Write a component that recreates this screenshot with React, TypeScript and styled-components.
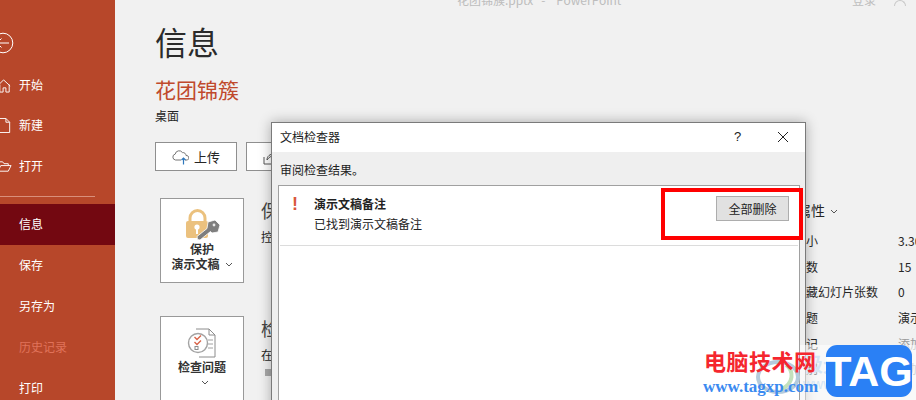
import React from 'react'
import styled, { createGlobalStyle } from 'styled-components'

const FONT = '"Noto Sans CJK SC", "Noto Sans", sans-serif'

const GlobalStyle = createGlobalStyle`
  html, body {
    margin: 0;
    padding: 0;
    background: #f1f1f1;
  }
  * {
    box-sizing: border-box;
  }
`

function BackIcon() {
  return (
    <BackSvg viewBox="0 0 22 22">
      <circle cx="11" cy="11" r="9.8" fill="none" stroke="#fff" strokeWidth="1" />
      <path d="M5 11h12M9.5 6.5L5 11l4.5 4.5" fill="none" stroke="#fff" strokeWidth="1" />
    </BackSvg>
  )
}

function HomeIcon() {
  return (
    <NavSvg viewBox="0 0 16 16">
      <path d="M1 8l6-6 7 6.5M3 7v8h3.5v-4.500h3V15H13V7" fill="none" stroke="#fff" strokeWidth="1" />
    </NavSvg>
  )
}

function NewIcon() {
  return (
    <NavSvg viewBox="0 0 16 16">
      <path d="M2.500 0.500h7l4 4v11h-11zM9.500 0.500v4h4" fill="none" stroke="#fff" strokeWidth="1" />
    </NavSvg>
  )
}

function OpenIcon() {
  return (
    <NavSvg viewBox="0 0 16 16">
      <path d="M1 13V3h5l1.500 2h4.500v2M1 13l3-6h11l-3 6z" fill="none" stroke="#fff" strokeWidth="1" />
    </NavSvg>
  )
}

function CloudIcon() {
  return (
    <svg width="17" height="16" viewBox="0 0 17 16">
      <path d="M9 11H3.500a3 3 0 0 1-.3-5.900A4 4 0 0 1 10.500 3.600 3 3 0 0 1 14 6.500a2.400 2.400 0 0 1 1.500 4.500H13" fill="none" stroke="#757575" strokeWidth="1" />
      <path d="M11.500 15.500V9M9.500 11l2-2 2 2" fill="none" stroke="#2f78bd" strokeWidth="1.200" />
    </svg>
  )
}

function ShareIcon() {
  return (
    <svg width="16" height="16" viewBox="0 0 16 16">
      <path d="M1 8v7h13v-3" fill="none" stroke="#555" strokeWidth="1" />
      <path d="M4 11c0-4 3-6 7-6V2.500L15.500 6 11 9.500V7c-3 0-5 1-7 4z" fill="none" stroke="#555" strokeWidth="1" />
    </svg>
  )
}

function LockIcon() {
  return (
    <svg width="38" height="32" viewBox="-2 0 38 32">
      <path d="M5 12V9a7.500 7.500 0 0 1 15 0v3" fill="none" stroke="#ebc17e" strokeWidth="3" />
      <rect x="1" y="12" width="22" height="17" rx="2" fill="#ebc17e" />
      <circle cx="12" cy="18" r="2.600" fill="#fff" />
      <rect x="11" y="19" width="2" height="6" fill="#fff" />
      <path d="M23 13l7-2 5 5-2 7-6 1-1.500-1.500L15 31l-2.500-.5-.5-3 10-8z" fill="#7e7e7e" stroke="#fff" strokeWidth="0.800" />
      <circle cx="29" cy="16" r="1.400" fill="#e8e8e8" />
    </svg>
  )
}

function InspectIcon() {
  return (
    <InspectSvg viewBox="0 0 30 30">
      <path d="M9 1h13l6 6v22H12" fill="none" stroke="#8c8c8c" strokeWidth="1" />
      <path d="M22 1v6h6" fill="none" stroke="#8c8c8c" strokeWidth="1" />
      <path d="M21 12h5M21 16h5M21 20h5" stroke="#a0a0a0" strokeWidth="1" />
      <circle cx="11" cy="15" r="9.500" fill="#fff" stroke="#a3a3a3" strokeWidth="1.400" />
      <path d="M7.500 9l2.500 2.500L14 7.500M7.500 14l2.500 2.500L14 12.500" fill="none" stroke="#d9654a" strokeWidth="1.400" />
      <rect x="8" y="18.500" width="3" height="3" fill="none" stroke="#8c8c8c" strokeWidth="1" />
    </InspectSvg>
  )
}

function Chevron() {
  return (
    <ChevronSvg viewBox="0 0 8 5">
      <path d="M1 1l3 3 3-3" fill="none" stroke="#555" strokeWidth="1" />
    </ChevronSvg>
  )
}

const navTop = [
  { label: '开始', icon: <HomeIcon /> },
  { label: '新建', icon: <NewIcon /> },
  { label: '打开', icon: <OpenIcon /> },
]

const navBottom = [
  { label: '信息', active: true },
  { label: '保存' },
  { label: '另存为' },
  { label: '历史记录', disabled: true },
  { label: '打印' },
]

const props = [
  { label: '大小', value: '3.30MB' },
  { label: '页数', value: '15' },
  { label: '隐藏幻灯片张数', value: '0' },
  { label: '标题', value: '演示文稿' },
  { label: '标记', value: '添加标记', muted: true },
  { label: '类别', value: '添加类别', muted: true },
]

export default function App() {
  return (
    <Page>
      <GlobalStyle />
      <Sidebar>
        <BackRow>
          <BackIcon />
        </BackRow>
        <NavGroup>
          {navTop.map((item) => (
            <TopNavItem key={item.label}>
              {item.icon}
              {item.label}
            </TopNavItem>
          ))}
        </NavGroup>
        <NavDivider />
        <NavGroup>
          {navBottom.map((item) => (
            <BottomNavItem key={item.label} $active={item.active} $disabled={item.disabled}>
              {item.label}
            </BottomNavItem>
          ))}
        </NavGroup>
      </Sidebar>

      <Main>
        <TitleBar>
          <WindowTitle>花团锦簇.pptx&nbsp;&nbsp; -&nbsp;&nbsp;&nbsp; PowerPoint</WindowTitle>
          <SignIn>登录</SignIn>
          <Avatar />
        </TitleBar>
        <Columns>
          <LeftColumn>
            <PageTitle>信息</PageTitle>
            <DocName>花团锦簇</DocName>
            <DocPath>桌面</DocPath>
            <ActionRow>
              <ActionButton>
                <CloudIcon />
                上传
              </ActionButton>
              <ActionButton>
                <ShareIcon />
                共享
              </ActionButton>
            </ActionRow>
            <Section>
              <FeatureCard>
                <LockIcon />
                <FeatureLabel>保护</FeatureLabel>
                <FeatureLabel>
                  演示文稿
                  <Chevron />
                </FeatureLabel>
              </FeatureCard>
              <SectionText>
                <SectionTitle>保护演示文稿</SectionTitle>
                <SectionDesc>控制其他人可以对此演示文稿所做的更改类型。</SectionDesc>
              </SectionText>
            </Section>
            <Section>
              <FeatureCard>
                <InspectIcon />
                <FeatureLabel>检查问题</FeatureLabel>
                <FeatureLabel>
                  <Chevron />
                </FeatureLabel>
              </FeatureCard>
              <SectionText>
                <SectionTitle>检查演示文稿</SectionTitle>
                <SectionDesc>在发布此文件之前,请注意其是否包含:</SectionDesc>
                <Bullet />
              </SectionText>
            </Section>
          </LeftColumn>
          <PropsColumn>
            <PropsTitle>
              属性
              <Chevron />
            </PropsTitle>
            {props.map((p) => (
              <PropRow key={p.label}>
                <PropLabel>{p.label}</PropLabel>
                <PropValue $muted={p.muted}>{p.value}</PropValue>
              </PropRow>
            ))}
          </PropsColumn>
        </Columns>
      </Main>

      <Dialog>
        <DialogHeader>
          <DialogTitle>文档检查器</DialogTitle>
          <HelpButton>?</HelpButton>
          <CloseButton>
            <svg width="12" height="12" viewBox="0 0 12 12">
              <path d="M1 1l10 10M11 1L1 11" stroke="#222" strokeWidth="1" />
            </svg>
          </CloseButton>
        </DialogHeader>
        <DialogBody>
          <DialogHint>审阅检查结果。</DialogHint>
          <ResultList>
            <ResultRow>
              <WarnMark>!</WarnMark>
              <ResultText>
                <ResultTitle>演示文稿备注</ResultTitle>
                <ResultDesc>已找到演示文稿备注</ResultDesc>
              </ResultText>
              <RemoveButton>全部删除</RemoveButton>
            </ResultRow>
          </ResultList>
        </DialogBody>
      </Dialog>

      <Highlight />

      <Watermark>
        <FaintBand>
          <FaintName>极光下载站</FaintName>
          <FaintUrl>www.xz7.com</FaintUrl>
        </FaintBand>
        <FaintLogo viewBox="0 0 44 40">
          <ellipse cx="22" cy="20" rx="20" ry="15" fill="none" stroke="#b5cbdc" strokeWidth="4" />
          <path d="M30 8c8 6 8 18-4 24" fill="none" stroke="#c3e0bc" strokeWidth="4" />
        </FaintLogo>
        <SiteName>电脑技术网</SiteName>
        <SiteUrl>www.tagxp.com</SiteUrl>
        <TagBadge>TAG</TagBadge>
      </Watermark>
    </Page>
  )
}

const Page = styled.div`
  position: relative;
  display: flex;
  width: 916px;
  height: 400px;
  overflow: hidden;
  background: #f1f1f1;
  font-family: ${FONT};
  color: #262626;
`

const Sidebar = styled.nav`
  flex: 0 0 115px;
  padding-top: 32px;
  background: #b7472a;
  color: #fff;
`

const BackRow = styled.div`
  height: 20px;
  margin-bottom: 13px;
`

const BackSvg = styled.svg`
  display: block;
  width: 22px;
  height: 22px;
  margin-left: -8px;
`

const NavGroup = styled.div`
  display: flex;
  flex-direction: column;
`

const TopNavItem = styled.div`
  display: flex;
  align-items: center;
  height: 40.5px;
  padding-bottom: 2px;
  font-size: 12px;
`

const NavSvg = styled.svg`
  flex: none;
  width: 15px;
  height: 15px;
  margin: 2px 7px 0 -3px;
`

const NavDivider = styled.div`
  width: 95px;
  height: 1px;
  margin: 9px 0 7px;
  background: #d98f7b;
`

const BottomNavItem = styled.div<{ $active?: boolean; $disabled?: boolean }>`
  display: flex;
  align-items: center;
  height: 41px;
  padding: 0 0 2px 19px;
  font-size: 12px;
  background: ${(p) => (p.$active ? '#730811' : 'transparent')};
  color: ${(p) => (p.$disabled ? '#e0735a' : '#fff')};
`

const Main = styled.main`
  display: flex;
  flex: 1;
  flex-direction: column;
  min-width: 0;
`

const TitleBar = styled.header`
  display: flex;
  align-items: center;
  height: 14px;
  margin-top: -8px;
  padding-left: 342px;
  font-size: 12px;
  color: #bdbdbd;
`

const WindowTitle = styled.span`
  flex: 1;
  white-space: nowrap;
`

const SignIn = styled.span`
  margin-right: 18px;
`

const Avatar = styled.span`
  align-self: flex-end;
  width: 12px;
  height: 6px;
  margin-right: 10px;
  border: 1px solid #c8c8c8;
  border-bottom: none;
  border-radius: 6px 6px 0 0;
`

const Columns = styled.div`
  display: flex;
  flex: 1;
  min-height: 0;
  padding-left: 40px;
`

const LeftColumn = styled.div`
  flex: 0 0 639px;
  padding-top: 15px;
`

const PageTitle = styled.h1`
  height: 40px;
  margin: 0;
  font-size: 32px;
  font-weight: 400;
  line-height: 40px;
  color: #2b2b2b;
`

const DocName = styled.div`
  height: 28px;
  margin-top: 14px;
  font-size: 21px;
  line-height: 28px;
  color: #c0492c;
`

const DocPath = styled.div`
  height: 18px;
  margin-top: 4px;
  font-size: 12px;
  line-height: 18px;
`

const ActionRow = styled.div`
  display: flex;
  gap: 9px;
  margin-top: 17px;
`

const ActionButton = styled.button`
  display: flex;
  align-items: center;
  justify-content: center;
  gap: 5px;
  width: 82px;
  height: 29px;
  padding: 0;
  border: 1px solid #8f8f8f;
  background: #fff;
  font-family: ${FONT};
  font-size: 13px;
  color: #262626;
`

const Section = styled.section`
  display: flex;
  gap: 17px;
  height: 85px;
  margin: 27px 0 -1px 5px;
  & + & {
    margin-top: 34px;
    height: 110px;
  }
`

const FeatureCard = styled.div`
  display: flex;
  flex: 0 0 84px;
  flex-direction: column;
  align-items: center;
  padding-top: 10px;
  border: 1px solid #999;
  background: #fff;
`

const InspectSvg = styled.svg`
  flex: none;
  width: 30px;
  height: 30px;
  margin: 1px 0 1px;
`

const FeatureLabel = styled.div`
  height: 15px;
  font-size: 12px;
  font-weight: 700;
  line-height: 15px;
  color: #333;
  white-space: nowrap;
`

const ChevronSvg = styled.svg`
  width: 8px;
  height: 5px;
  margin-left: 5px;
  vertical-align: 2px;
`

const SectionText = styled.div`
  flex: 1;
  white-space: nowrap;
`

const SectionTitle = styled.div`
  height: 24px;
  font-size: 18px;
  line-height: 24px;
  color: #444;
`

const SectionDesc = styled.div`
  margin-top: 6px;
  font-size: 12px;
  line-height: 18px;
`

const Bullet = styled.div`
  width: 7px;
  height: 7px;
  margin: 5px 0 0 4px;
  background: #a8a8a8;
`

const PropsColumn = styled.aside`
  flex: none;
  width: 130px;
  padding-top: 192px;
  white-space: nowrap;
`

const PropsTitle = styled.div`
  height: 30px;
  margin-left: 3px;
  font-size: 14px;
  line-height: 24px;
`

const PropRow = styled.div`
  display: flex;
  height: 25.6px;
  align-items: center;
  font-size: 12px;
`

const PropLabel = styled.span`
  flex: 0 0 104px;
`

const PropValue = styled.span<{ $muted?: boolean }>`
  color: ${(p) => (p.$muted ? '#9a9a9a' : '#262626')};
`

const Dialog = styled.div`
  position: absolute;
  top: 122px;
  left: 271px;
  display: flex;
  flex-direction: column;
  width: 535px;
  height: 300px;
  border: 1px solid #7a7a7a;
  background: #fff;
  box-shadow: 0 0 12px rgba(0, 0, 0, 0.3);
`

const DialogHeader = styled.div`
  display: flex;
  flex: 0 0 29px;
  align-items: center;
  padding: 0 0 2px 8px;
  background: #fff;
`

const DialogTitle = styled.div`
  flex: 1;
  font-size: 12px;
  color: #222;
`

const HelpButton = styled.span`
  width: 43px;
  font-family: "Liberation Sans", sans-serif;
  font-size: 13px;
  color: #222;
`

const CloseButton = styled.span`
  display: flex;
  width: 28px;
`

const DialogBody = styled.div`
  display: flex;
  flex: 1;
  flex-direction: column;
  padding: 0 5px 0 6px;
  background: #efefef;
`

const DialogHint = styled.div`
  height: 33px;
  padding: 9px 0 0 2px;
  font-size: 12px;
  line-height: 18px;
  color: #222;
`

const ResultList = styled.div`
  flex: 1;
  padding: 0 1px;
  border: 1px solid #a0a0a0;
  background: #fff;
`

const ResultRow = styled.div`
  display: flex;
  height: 60px;
  padding: 9px 9px 0 12px;
  border-bottom: 1px solid #dcdcdc;
`

const WarnMark = styled.span`
  flex: 0 0 22px;
  font-family: "Liberation Sans", sans-serif;
  font-size: 18px;
  font-weight: 700;
  line-height: 18px;
  color: #d9573c;
`

const ResultText = styled.div`
  flex: 1;
  font-size: 12px;
  line-height: 18px;
  color: #222;
`

const ResultTitle = styled.div`
  font-weight: 700;
`

const ResultDesc = styled.div`
  margin-top: 2px;
`

const RemoveButton = styled.button`
  width: 73px;
  height: 25px;
  margin-top: 1px;
  padding: 0;
  border: 1px solid #adadad;
  background: #e1e1e1;
  font-family: ${FONT};
  font-size: 12px;
  color: #222;
`

const Highlight = styled.div`
  position: absolute;
  top: 188px;
  left: 661px;
  width: 142px;
  height: 52px;
  border: 4px solid #f00;
`

const Watermark = styled.div`
  position: absolute;
  top: 340px;
  left: 700px;
  width: 216px;
  height: 60px;
`

const FaintBand = styled.div`
  position: absolute;
  top: 5px;
  left: 100px;
  width: 116px;
  height: 55px;
  padding: 7px 0 0 3px;
  background: rgba(255, 255, 255, 0.55);
  white-space: nowrap;
`

const FaintName = styled.div`
  font-size: 20px;
  line-height: 24px;
  font-weight: 700;
  color: #d5e5f4;
`

const FaintUrl = styled.div`
  font-family: "Liberation Sans", sans-serif;
  font-size: 14px;
  color: #d5e5f4;
`

const FaintLogo = styled.svg`
  position: absolute;
  top: 17px;
  left: 56px;
  width: 44px;
  height: 40px;
`

const SiteName = styled.div`
  position: absolute;
  top: 5px;
  left: 4px;
  font-size: 22px;
  font-weight: 700;
  line-height: 30px;
  letter-spacing: 0.500px;
  color: #f5262e;
  white-space: nowrap;
`

const SiteUrl = styled.div`
  position: absolute;
  top: 38px;
  left: 3px;
  font-family: "Liberation Serif", serif;
  font-size: 17px;
  font-weight: 700;
  line-height: 18px;
  color: #3b8af0;
  white-space: nowrap;
`

const TagBadge = styled.div`
  position: absolute;
  top: 5px;
  left: 126px;
  display: flex;
  align-items: center;
  justify-content: center;
  width: 86px;
  height: 52px;
  border-radius: 11px;
  background: #2a80f5;
  font-family: "Liberation Sans", sans-serif;
  font-size: 43px;
  font-weight: 700;
  color: #fff;
`
